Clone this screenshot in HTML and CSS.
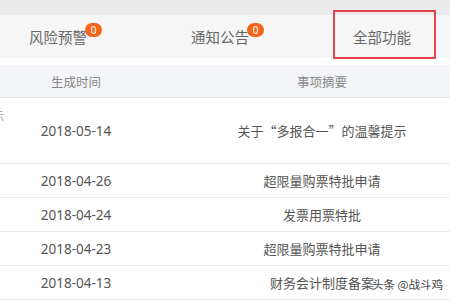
FILE: index.html
```html
<!DOCTYPE html>
<html lang="zh-CN">
<head>
    <meta charset="UTF-8">
    <title>全部功能</title>
    <link rel="stylesheet" href="styles.css">
</head>
<body>
    <div class="page">
        <div class="topbar"></div>
        <nav class="tabs">
            <div class="tab"><span class="tab-label">风险预警<b class="badge">0</b></span></div>
            <div class="tab"><span class="tab-label">通知公告<b class="badge">0</b></span></div>
            <div class="tab"><span class="tab-label">全部功能</span></div>
        </nav>
        <div class="highlight"></div>

        <div class="table">
            <div class="row head">
                <div class="cell cut"></div>
                <div class="cell">生成时间</div>
                <div class="cell">事项摘要</div>
            </div>
            <div class="row first">
                <div class="cell cut"><span>示</span></div>
                <div class="cell date">2018-05-14</div>
                <div class="cell">关于“多报合一”的温馨提示</div>
            </div>
            <div class="row">
                <div class="cell cut"></div>
                <div class="cell date">2018-04-26</div>
                <div class="cell">超限量购票特批申请</div>
            </div>
            <div class="row">
                <div class="cell cut"></div>
                <div class="cell date">2018-04-24</div>
                <div class="cell">发票用票特批</div>
            </div>
            <div class="row">
                <div class="cell cut"></div>
                <div class="cell date">2018-04-23</div>
                <div class="cell">超限量购票特批申请</div>
            </div>
            <div class="row">
                <div class="cell cut"></div>
                <div class="cell date">2018-04-13</div>
                <div class="cell">财务会计制度备案</div>
            </div>
        </div>

        <div class="watermark">头条 @战斗鸡</div>
    </div>
</body>
</html>
```

FILE: styles.css
```css
* {
    margin: 0;
    padding: 0;
    box-sizing: border-box;
}
body {
    background: #fff;
    font-family: "Noto Sans CJK SC", "Noto Sans", sans-serif;
    color: #555;
}
.page {
    position: relative;
    width: 450px;
    height: 300px;
    overflow: hidden;
}
.topbar {
    height: 15px;
    background: #ebebeb;
}
.tabs {
    display: grid;
    grid-template-columns: 116px 208px 126px;
    height: 43px;
    background: #f6f6f6;
}
.tab {
    display: flex;
    align-items: center;
    justify-content: center;
    font-size: 14.5px;
    color: #666;
}
.tab:last-child {
    justify-content: flex-start;
    padding-left: 29px;
}
.tab-label {
    position: relative;
}
.badge {
    position: absolute;
    left: 100%;
    top: -3px;
    margin-left: -2px;
    min-width: 17px;
    height: 14px;
    padding: 0 4px;
    border-radius: 7px;
    background: #f2661c;
    color: #fff;
    font-family: "Noto Sans", sans-serif;
    font-size: 10px;
    font-weight: normal;
    line-height: 14px;
    text-align: center;
}
.highlight {
    position: absolute;
    left: 333px;
    top: 10px;
    width: 103px;
    height: 49px;
    border: 2px solid #e5434f;
}
.table {
    margin-top: 7px;
    margin-left: -48px;
    width: 540px;
}
.row {
    display: grid;
    grid-template-columns: 48px 152px 340px;
    height: 34px;
    border-bottom: 1px solid #e8e8e8;
    font-size: 13px;
}
.row.head {
    height: 33px;
    background: #f3f5f8;
    color: #888;
    font-size: 12.5px;
}
.row.first {
    height: 66px;
}
.cell {
    display: flex;
    align-items: center;
    justify-content: center;
    white-space: nowrap;
}
.cell.date {
    font-family: "Noto Sans", sans-serif;
    font-size: 13.5px;
    color: #555;
}
.cell.cut {
    justify-content: flex-end;
    align-items: flex-start;
    color: #aaa;
    font-size: 12px;
}
.cell.cut span {
    margin-top: 9px;
    margin-right: -4px;
}
.watermark {
    position: absolute;
    left: 372px;
    top: 276px;
    font-size: 11.5px;
    color: #444;
    white-space: nowrap;
    text-shadow: 0 0 2px #fff;
}
```
